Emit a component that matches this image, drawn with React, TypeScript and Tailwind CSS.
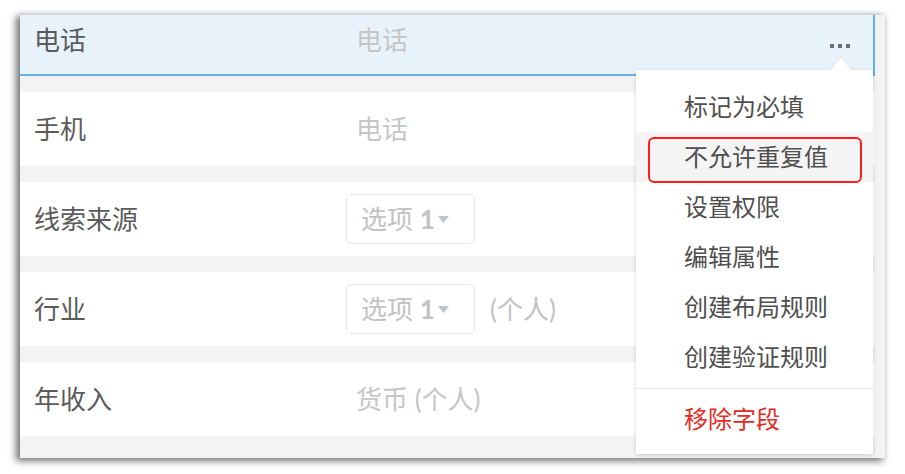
import React from "react";

const font = { fontFamily: '"Lato", "Noto Sans CJK SC", sans-serif' };

function Caret() {
  return (
    <svg width="11" height="7" viewBox="0 0 11 7" className="ml-[3px] mt-[1px]">
      <polygon points="0,0 11,0 5.5,7" fill="#b7c5ce" />
    </svg>
  );
}

function SelectBox() {
  return (
    <div className="flex items-center w-[129px] h-[50px] border border-[#e6e9eb] rounded-[5px] bg-white pl-[14px]">
      <span className="text-[26px] text-[#c2c2c2] leading-none">选项 <span className="font-bold">1</span></span>
      <Caret />
    </div>
  );
}

function Row({ label, children, first }: { label: string; children?: React.ReactNode; first?: boolean }) {
  return (
    <div
      className={
        first
          ? "flex items-center h-[61px] shrink-0 mr-[10px] bg-[#e8f2fb] border-b-2 border-r-2 border-[#66b1e5] pl-[14px] pb-[10px]"
          : "flex items-center h-[74px] shrink-0 mr-[10px] bg-white pl-[14px]"
      }
    >
      <div className="w-[312px] shrink-0 text-[26px] text-[#5b5b5b] leading-none">{label}</div>
      {children}
    </div>
  );
}

const items = ["标记为必填", "不允许重复值", "设置权限", "编辑属性", "创建布局规则", "创建验证规则"];

export default function App() {
  return (
    <div className="relative w-[905px] h-[474px] bg-white pl-[20px] pt-[15px] overflow-hidden" style={font}>
      <div className="relative w-[865px] h-[443px] bg-[#f3f3f3] flex flex-col gap-[16px] overflow-hidden shadow-[-3px_2px_7px_1px_rgba(0,0,0,0.55)]">
        <Row label="电话" first>
          <span className="pl-[10px] text-[26px] text-[#c6c6c6] leading-none">电话</span>
          <div className="ml-auto mr-[23px] flex gap-[4px] mt-[12px]">
            <div className="w-[4px] h-[4px] bg-[#6f6f6f]" />
            <div className="w-[4px] h-[4px] bg-[#6f6f6f]" />
            <div className="w-[4px] h-[4px] bg-[#6f6f6f]" />
          </div>
        </Row>
        <Row label="手机">
          <span className="pl-[10px] text-[26px] text-[#c6c6c6] leading-none">电话</span>
        </Row>
        <Row label="线索来源">
          <SelectBox />
        </Row>
        <Row label="行业">
          <SelectBox />
          <span className="pl-[15px] text-[26px] text-[#c2c2c2] leading-none">(个人)</span>
        </Row>
        <Row label="年收入">
          <span className="pl-[10px] text-[26px] text-[#c6c6c6] leading-none">货币 (个人)</span>
        </Row>
      </div>

      {/* dropdown menu */}
      <div className="absolute left-[636px] top-[70px] w-[237px] h-[384px] bg-white shadow-[0_1px_4px_rgba(0,0,0,0.18)] pt-[12px]">
        <svg width="24" height="15" viewBox="0 0 24 15" className="absolute left-[193px] top-[-14px]">
          <polygon points="0,15 12,1 24,15" fill="#ffffff" stroke="#e2e2e2" strokeWidth="1" />
          <rect x="0" y="14" width="24" height="2" fill="#ffffff" />
        </svg>
        {items.map((t, i) => (
          <div
            key={t}
            className={
              (i === 1 ? "bg-[#f4f4f4] " : "") +
              "h-[50px] flex items-center pl-[48px] text-[24px] text-[#4f4f4f] leading-none"
            }
          >
            {t}
          </div>
        ))}
        <div className="mt-[6px] h-[1px] bg-[#e4e4e4]" />
        <div className="h-[50px] mt-[5px] flex items-center pl-[48px] text-[24px] text-[#e62a22] leading-none">
          移除字段
        </div>
      </div>

      {/* annotation */}
      <div className="absolute left-[648px] top-[137px] w-[214px] h-[46px] border-2 border-[#ff1c1c] rounded-[6px]" />
    </div>
  );
}
